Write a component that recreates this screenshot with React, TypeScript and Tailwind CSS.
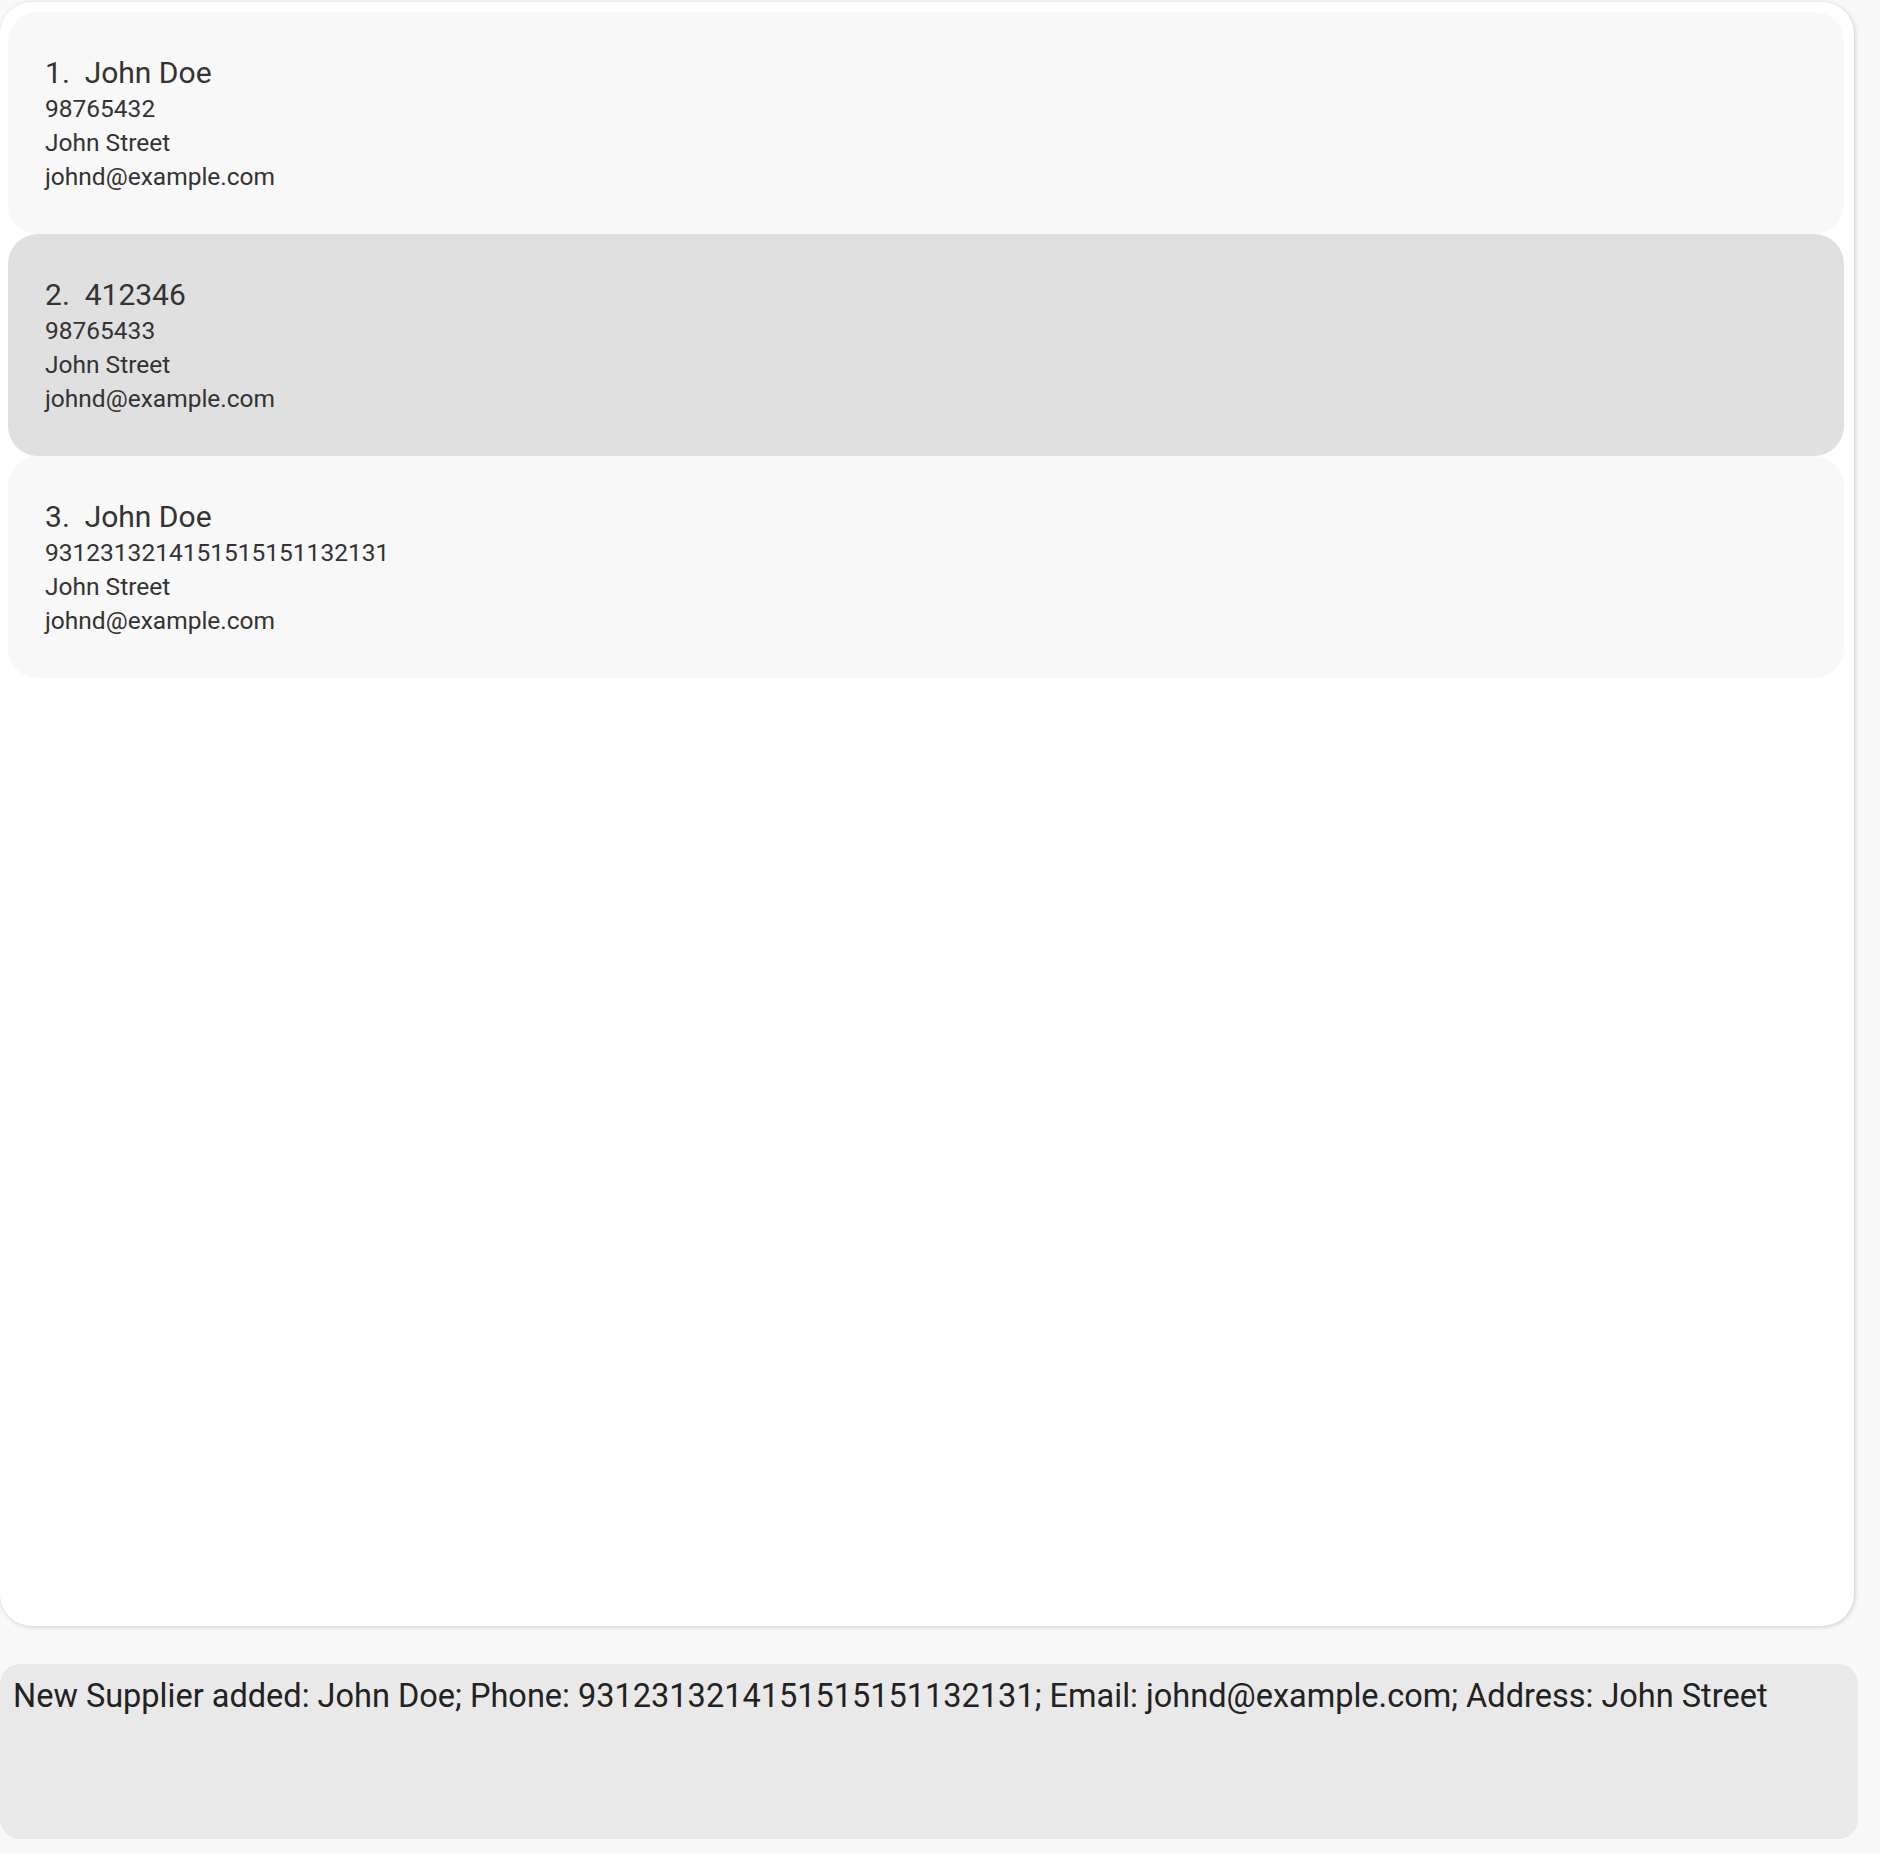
import React from "react";

type Supplier = {
  name: string;
  phone: string;
  address: string;
  email: string;
};

const suppliers: Supplier[] = [
  { name: "John Doe", phone: "98765432", address: "John Street", email: "johnd@example.com" },
  { name: "412346", phone: "98765433", address: "John Street", email: "johnd@example.com" },
  { name: "John Doe", phone: "9312313214151515151132131", address: "John Street", email: "johnd@example.com" },
];

export default function App() {
  const selected = 1;

  return (
    <div
      className="h-[1854px] w-[1880px] bg-[#f9f9f9] text-[#333333] overflow-hidden"
      style={{ fontFamily: "Roboto, 'Noto Sans', sans-serif" }}
    >
      {/* supplier list panel */}
      <div className="mt-[2px] h-[1624px] w-[1854px] rounded-[32px] bg-white shadow-[1px_1px_5px_rgba(0,0,0,0.18)] pl-[8px] pt-[10px] pr-[10px]">
        <div className="flex flex-col">
          {suppliers.map((s, i) => (
            <div
              key={i}
              className={
                "h-[222px] w-[1836px] rounded-[30px] pl-[37px] pt-[42px] " +
                (i === selected ? "bg-[#e0e0e0]" : "bg-[#f8f8f8]")
              }
            >
              <div className="whitespace-pre text-[30px] leading-[38px] text-[#333333]">
                {i + 1}.  {s.name}
              </div>
              <div className="text-[24.5px] leading-[34px] text-[#333333]">
                <div>{s.phone}</div>
                <div>{s.address}</div>
                <div>{s.email}</div>
              </div>
            </div>
          ))}
        </div>
      </div>

      {/* result box */}
      <div className="mt-[38px] h-[175px] w-[1858px] rounded-[20px] bg-[#e9e9e9] pl-[13px] pt-[12px]">
        <p className="text-[32.5px] leading-[40px] text-[#222222] whitespace-nowrap">
          New Supplier added: John Doe; Phone: 9312313214151515151132131; Email: johnd@example.com; Address: John Street
        </p>
      </div>
    </div>
  );
}
